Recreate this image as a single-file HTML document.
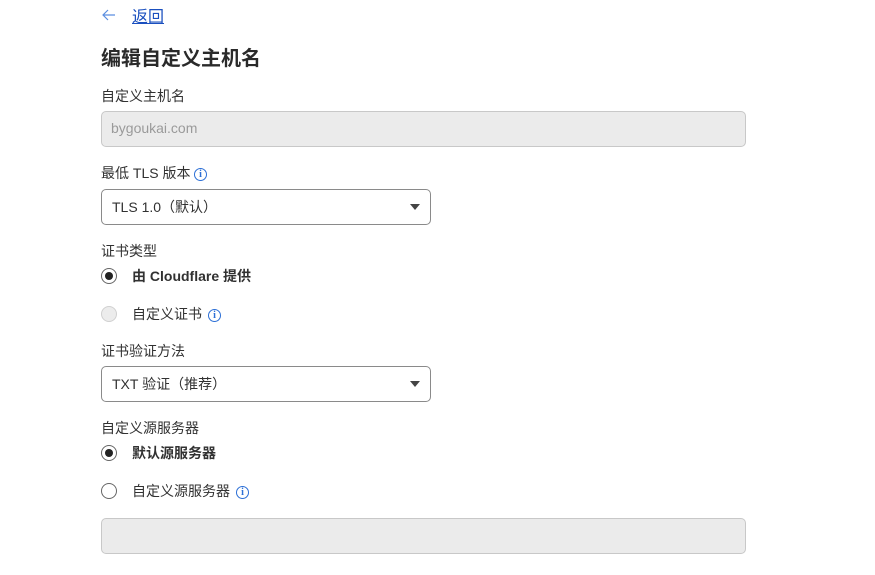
<!DOCTYPE html>
<html><head><meta charset="utf-8"><style>
*{margin:0;padding:0;box-sizing:border-box}
body{width:875px;height:575px;background:#fff;position:relative;overflow:hidden;font-family:"Liberation Sans","Noto Sans CJK SC",sans-serif;color:#313131}
.a{position:absolute;white-space:nowrap}
.lbl{font-size:14px;line-height:16px}
.box{position:absolute;border-radius:5px}
.inp{background:#ebebeb;border:1px solid #c8c8c8}
.sel{background:#fff;border:1px solid #8a8a8a}
.tri{position:absolute;width:0;height:0;border-left:5px solid transparent;border-right:5px solid transparent;border-top:6px solid #444}
.radio{position:absolute;width:16px;height:16px;border-radius:50%;border:1px solid #666;background:#fff}
.radio.on::after{content:"";position:absolute;left:3px;top:3px;width:8px;height:8px;border-radius:50%;background:#222}
.radio.dis{border-color:#d0d0d0;background:#ececec}
.info{position:absolute;width:13px;height:13px;border:1.3px solid #2c6fd6;border-radius:50%;color:#2c6fd6;font-size:10px;line-height:11px;text-align:center;font-family:"Liberation Serif",serif;font-weight:bold}
</style></head><body>
<svg class="a" style="left:101px;top:8px" width="16" height="14" viewBox="0 0 16 14"><path d="M14 7H2M7 2L2 7l5 5" fill="none" stroke="#5a8ee0" stroke-width="1.2"/></svg>
<div class="a" style="left:132px;top:8px;font-size:16px;line-height:20px;color:#1a4fbf;text-decoration:underline">返回</div>
<div class="a" style="left:101px;top:47px;font-size:20px;line-height:24px;font-weight:bold;color:#2a2a2a">编辑自定义主机名</div>
<div class="a lbl" style="left:101px;top:88px">自定义主机名</div>
<div class="box inp" style="left:101px;top:111px;width:645px;height:36px"></div>
<div class="a" style="left:111px;top:120px;font-size:14px;line-height:16px;color:#9a9a9a">bygoukai.com</div>
<div class="a lbl" style="left:101px;top:165px">最低 TLS 版本</div>
<div class="info" style="left:194px;top:168px">i</div>
<div class="box sel" style="left:101px;top:189px;width:330px;height:36px"></div>
<div class="a" style="left:112px;top:199px;font-size:14px;line-height:16px">TLS 1.0（默认）</div>
<div class="tri" style="left:410px;top:204px"></div>
<div class="a lbl" style="left:101px;top:243px">证书类型</div>
<div class="radio on" style="left:101px;top:268px"></div>
<div class="a" style="left:132px;top:268px;font-size:14px;line-height:16px;font-weight:bold">由 Cloudflare 提供</div>
<div class="radio dis" style="left:101px;top:306px"></div>
<div class="a lbl" style="left:132px;top:306px">自定义证书</div>
<div class="info" style="left:208px;top:309px">i</div>
<div class="a lbl" style="left:101px;top:343px">证书验证方法</div>
<div class="box sel" style="left:101px;top:366px;width:330px;height:36px"></div>
<div class="a" style="left:112px;top:376px;font-size:14px;line-height:16px">TXT 验证（推荐）</div>
<div class="tri" style="left:410px;top:381px"></div>
<div class="a lbl" style="left:101px;top:420px">自定义源服务器</div>
<div class="radio on" style="left:101px;top:445px"></div>
<div class="a" style="left:132px;top:445px;font-size:14px;line-height:16px;font-weight:bold">默认源服务器</div>
<div class="radio" style="left:101px;top:483px"></div>
<div class="a lbl" style="left:132px;top:483px">自定义源服务器</div>
<div class="info" style="left:236px;top:486px">i</div>
<div class="box inp" style="left:101px;top:518px;width:645px;height:36px"></div>
</body></html>
